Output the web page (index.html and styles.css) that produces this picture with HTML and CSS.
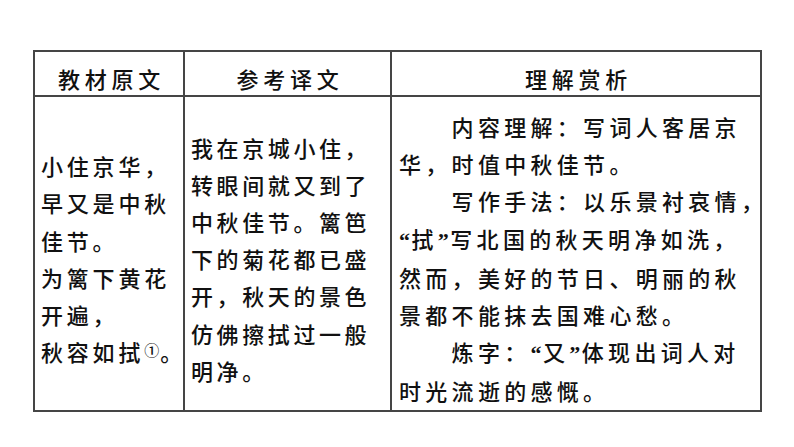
FILE: index.html
```html
<!DOCTYPE html>
<html lang="zh-CN">
<head>
<meta charset="utf-8">
<link rel="stylesheet" href="styles.css">
</head>
<body>
<table class="tbl">
  <colgroup>
    <col class="c1">
    <col class="c2">
    <col class="c3">
  </colgroup>
  <thead>
    <tr class="head">
      <th class="h1">教材原文</th>
      <th class="h2">参考译文</th>
      <th class="h3">理解赏析</th>
    </tr>
  </thead>
  <tbody>
    <tr class="body">
      <td class="orig">小住京华，<br>早又是中秋<br>佳节。<br>为篱下黄花<br>开遍，<br>秋容如拭<span class="note">①</span>。</td>
      <td class="trans">我在京城小住，<br>转眼间就又到了<br>中秋佳节。篱笆<br>下的菊花都已盛<br>开，秋天的景色<br>仿佛擦拭过一般<br>明净。</td>
      <td class="anal">
        <p class="para"><span class="ind"></span>内容理解：写词人客居京<br>华，时值中秋佳节。</p>
        <p class="para"><span class="ind"></span>写作手法：以乐景衬哀情，<br><span class="q">“</span>拭<span class="q">”</span>写北国的秋天明净如洗，<br>然而，美好的节日、明丽的秋<br>景都不能抹去国难心愁。</p>
        <p class="para"><span class="ind"></span>炼字：<span class="q">“</span>又<span class="q">”</span>体现出词人对<br>时光流逝的感慨。</p>
      </td>
    </tr>
  </tbody>
</table>
</body>
</html>
```

FILE: styles.css
```css
html, body {
  margin: 0;
  padding: 0;
  background: #ffffff;
}
body {
  padding: 50px 0 0 33px;
  font-family: "Noto Sans CJK SC", "Noto Sans", sans-serif;
  color: #111111;
}
.tbl {
  border-collapse: collapse;
  table-layout: fixed;
  width: 727px;
  border: 2px solid #454545;
}
.c1 { width: 150px; }
.c2 { width: 207px; }
.c3 { width: 370px; }
.tbl th, .tbl td {
  border: 2px solid #454545;
  font-size: 22px;
  font-weight: 500;
}
.head th {
  height: 44px;
  box-sizing: border-box;
  padding: 9px 0 0 5px;
  line-height: 34px;
  letter-spacing: 4.7px;
  text-align: center;
  vertical-align: middle;
}
.body td {
  height: 309px;
  box-sizing: border-box;
  vertical-align: middle;
  padding-top: 11px;
  padding-bottom: 0;
  line-height: 37.2px;
  text-align: left;
  white-space: nowrap;
}
.orig {
  padding-left: 6px;
  letter-spacing: 3.8px;
}
.trans {
  padding-left: 6px;
  letter-spacing: 3.6px;
}
.anal {
  padding-left: 7px;
  letter-spacing: 4.3px;
}
.para {
  margin: 0;
}
.ind {
  display: inline-block;
  width: 52.6px;
}
.q {
  font-family: "Liberation Serif", serif;
  font-weight: 700;
  letter-spacing: 1.5px;
}
.note {
  font-family: "Noto Sans CJK SC", sans-serif;
  font-size: 15px;
  letter-spacing: 1px;
  vertical-align: 5px;
  line-height: 1;
}
```
